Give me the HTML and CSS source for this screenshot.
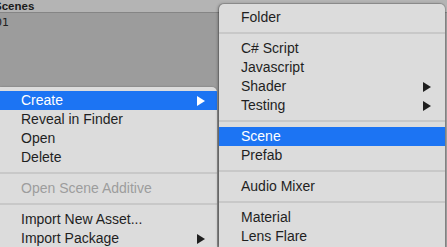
FILE: index.html
```html
<!DOCTYPE html>
<html lang="en">
<head>
  <meta charset="UTF-8">
  <meta name="viewport" content="width=device-width,initial-scale=1.0">
  <title>Project context menu</title>
  <link rel="stylesheet" href="styles.css">
</head>
<body>
  <div class="panel">
    <div class="panel-head">Scenes</div>
    <div class="panel-body">01</div>
  </div>

  <!-- context menu on the asset -->
  <ul class="menu menu-main">
    <li class="item active sub">Create</li>
    <li class="item">Reveal in Finder</li>
    <li class="item">Open</li>
    <li class="item">Delete</li>
    <li class="sep"></li>
    <li class="item disabled">Open Scene Additive</li>
    <li class="sep"></li>
    <li class="item">Import New Asset...</li>
    <li class="item sub">Import Package</li>
  </ul>

  <!-- Create submenu -->
  <ul class="menu menu-create">
    <li class="item">Folder</li>
    <li class="sep"></li>
    <li class="item">C# Script</li>
    <li class="item">Javascript</li>
    <li class="item sub">Shader</li>
    <li class="item sub">Testing</li>
    <li class="sep"></li>
    <li class="item active">Scene</li>
    <li class="item">Prefab</li>
    <li class="sep"></li>
    <li class="item">Audio Mixer</li>
    <li class="sep"></li>
    <li class="item">Material</li>
    <li class="item">Lens Flare</li>
  </ul>
</body>
</html>
```

FILE: styles.css
```css
body {
  margin: 0;
  width: 447px;
  height: 247px;
  overflow: hidden;
  position: relative;
  background: #9c9c9c;
  font-family: "Liberation Sans", Arial, sans-serif;
  color: #1f1f1f;
}
.panel-head {
  height: 12px;
  line-height: 12px;
  margin-left: -6px;
  background: #b4b4b4;
  border-bottom: 1px solid #858585;
  font-size: 11.5px;
  font-weight: 700;
  color: #1a1a1a;
}
.panel-body {
  margin-left: -5px;
  padding-top: 3px;
  font-family: "DejaVu Sans", sans-serif;
  font-size: 11px;
  color: #222;
}
.menu {
  position: absolute;
  list-style: none;
  margin: 0;
  padding: 4px 0 0 0;
  overflow: hidden;
  background: #dcdcdc;
  font-size: 14px;
}
.menu-main {
  left: 0;
  top: 87px;
  width: 217px;
  height: 156px;
  border-top-right-radius: 5px;
  box-shadow: 0 0 2px rgba(0, 0, 0, 0.3);
}
.menu-create {
  left: 219px;
  top: 4px;
  width: 226px;
  height: 239px;
  border-radius: 5px 5px 0 0;
  box-shadow: 0 0 0 1px rgba(0, 0, 0, 0.12), -1px 0 3px rgba(0, 0, 0, 0.35);
}
.item {
  height: 19px;
  line-height: 19px;
  display: flex;
  align-items: center;
  justify-content: space-between;
  white-space: nowrap;
}
.menu-main .item { padding: 0 12px 0 21px; }
.menu-create .item { padding: 0 14px 0 22px; }
.item.active {
  background: #1c74f3;
  color: #fff;
}
.item.disabled { color: #9d9d9d; }
.item.sub::after {
  content: "";
  border-left: 8px solid #1f1f1f;
  border-top: 5px solid transparent;
  border-bottom: 5px solid transparent;
}
.item.active.sub::after { border-left-color: #fff; }
.sep {
  height: 12px;
  display: flex;
  align-items: center;
}
.sep::before {
  content: "";
  flex: 1;
  height: 2px;
  background: #c8c8c8;
}
```
